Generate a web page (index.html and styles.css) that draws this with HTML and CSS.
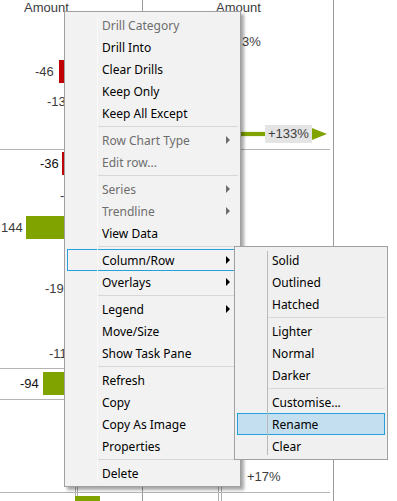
FILE: index.html
```html
<!DOCTYPE html>
<html lang="en">
<head>
    <meta charset="UTF-8">
    <title>Chart context menu</title>
    <link rel="stylesheet" href="styles.css">
</head>
<body>
<!-- chart behind the menu -->
<div class="chart">
    <span class="hdr hdr-l">Amount</span>
    <span class="hdr hdr-r">Amount</span>

    <div class="vl vl-top"></div>
    <div class="vl vl-right"></div>
    <div class="vl vl-bot"></div>
    <div class="vl vl-b1"></div>
    <div class="vl vl-b2"></div>
    <div class="vl vl-b3"></div>
    <div class="vl vl-b4"></div>

    <div class="hl hl-1"></div>
    <div class="hl hl-2"></div>
    <div class="hl hl-3"></div>
    <div class="hl hl-4"></div>
    <div class="hl hl-5"></div>

    <span class="num n46">-46</span>
    <div class="bar red b46"></div>
    <span class="num n13">-13</span>
    <span class="num n36">-36</span>
    <div class="bar red b36"></div>
    <span class="num nminus">-</span>
    <span class="num n144">144</span>
    <div class="bar green b144"></div>
    <span class="num n19">-19</span>
    <span class="num n11">-11</span>
    <span class="num n94">-94</span>
    <div class="bar green b94"></div>
    <div class="bar green bbot"></div>

    <span class="num p3">3%</span>
    <div class="trend">
        <div class="trend-line"></div>
        <span class="trend-label">+133%</span>
        <div class="trend-head"></div>
    </div>
    <span class="num p17">+17%</span>
</div>

<!-- context menu -->
<div class="menu main-menu">
    <div class="item off">Drill Category</div>
    <div class="item">Drill Into</div>
    <div class="item">Clear Drills</div>
    <div class="item">Keep Only</div>
    <div class="item">Keep All Except</div>
    <div class="sep"></div>
    <div class="item off">Row Chart Type<i class="arrow"></i></div>
    <div class="item off">Edit row...</div>
    <div class="sep"></div>
    <div class="item off">Series<i class="arrow"></i></div>
    <div class="item off">Trendline<i class="arrow"></i></div>
    <div class="item">View Data</div>
    <div class="sep"></div>
    <div class="item open">Column/Row<i class="arrow"></i></div>
    <div class="item">Overlays<i class="arrow"></i></div>
    <div class="sep"></div>
    <div class="item">Legend<i class="arrow"></i></div>
    <div class="item">Move/Size</div>
    <div class="item">Show Task Pane</div>
    <div class="sep"></div>
    <div class="item">Refresh</div>
    <div class="item">Copy</div>
    <div class="item">Copy As Image</div>
    <div class="item">Properties</div>
    <div class="sep"></div>
    <div class="item">Delete</div>
</div>

<div class="menu sub-menu">
    <div class="item">Solid</div>
    <div class="item">Outlined</div>
    <div class="item">Hatched</div>
    <div class="sep"></div>
    <div class="item">Lighter</div>
    <div class="item">Normal</div>
    <div class="item">Darker</div>
    <div class="sep"></div>
    <div class="item">Customise...</div>
    <div class="item hover">Rename</div>
    <div class="item">Clear</div>
</div>
</body>
</html>
```

FILE: styles.css
```css
*{
    margin: 0;
    padding: 0;
    box-sizing: border-box;
}
html,body{
    width: 397px;
    height: 501px;
    overflow: hidden;
    background: #fff;
}
body{
    position: relative;
    font-family: "Liberation Sans", Arial, sans-serif;
}

/* chart */
.chart{
    position: relative;
    width: 397px;
    height: 501px;
}
.hdr,.num{
    position: absolute;
    font-size: 13px;
    line-height: 15px;
    color: #3c3c3c;
    white-space: nowrap;
}
.hdr-l{ left: 24px; top: 0; }
.hdr-r{ left: 216px; top: 0; }

.vl{
    position: absolute;
    width: 1px;
    background: #9a9a9a;
}
.vl-top{ left: 142px; top: 0; height: 12px; }
.vl-right{ left: 333px; top: 0; height: 501px; }
.vl-bot{ left: 142px; top: 486px; height: 15px; }
.vl-b1{ left: 75px; top: 486px; height: 15px; background: #b0b0b0; }
.vl-b2{ left: 77px; top: 486px; height: 15px; background: #b0b0b0; }
.vl-b3{ left: 218px; top: 486px; height: 15px; background: #b0b0b0; }
.vl-b4{ left: 221px; top: 486px; height: 15px; background: #b0b0b0; }

.hl{
    position: absolute;
    height: 1px;
    background: #b4b4b4;
}
.hl-1{ left: 0; top: 149px; width: 66px; }
.hl-2{ left: 240px; top: 149px; width: 90px; }
.hl-3{ left: 0; top: 368px; width: 66px; }
.hl-4{ left: 0; top: 399px; width: 66px; }
.hl-5{ left: 0; top: 492px; width: 330px; }

.bar{ position: absolute; }
.red{ background: #c00000; }
.green{ background: #80a300; }

.n46{ left: 35px; top: 64px; }
.b46{ left: 59px; top: 60px; width: 12px; height: 23px; }
.n13{ left: 47px; top: 94px; }
.n36{ left: 40px; top: 156px; color: #111; }
.b36{ left: 62px; top: 152px; width: 2px; height: 23px; }
.nminus{ left: 60px; top: 188px; }
.n144{ left: 1px; top: 220px; }
.b144{ left: 26px; top: 216px; width: 44px; height: 23px; }
.n19{ left: 45px; top: 281px; }
.n11{ left: 49px; top: 346px; }
.n94{ left: 20px; top: 376px; color: #111; }
.b94{ left: 43px; top: 372px; width: 27px; height: 23px; }
.bbot{ left: 75px; top: 496px; width: 25px; height: 5px; }

.p3{ left: 242px; top: 34px; }
.p17{ left: 247px; top: 469px; }

.trend{
    position: absolute;
    left: 236px;
    top: 125px;
    display: flex;
    align-items: center;
    height: 18px;
}
.trend-line{
    width: 29px;
    height: 4px;
    background: #80a300;
    box-shadow: 0 0 2px #c8dc8c;
}
.trend-label{
    background: #e4e4e4;
    color: #3c3c3c;
    font-size: 13px;
    line-height: 18px;
    padding: 0 3px;
}
.trend-head{
    width: 0;
    height: 0;
    border-left: 15px solid #80a300;
    border-top: 6px solid transparent;
    border-bottom: 6px solid transparent;
}

/* menus */
.menu{
    position: absolute;
    display: flex;
    flex-direction: column;
    padding: 2px;
    border: 1px solid #a0a0a0;
    background: #f2f2f2;
    font-family: "Noto Sans", "Segoe UI", sans-serif;
    font-size: 12px;
    color: #000;
}
.menu::before{
    content: "";
    position: absolute;
    left: 32px;
    top: 4px;
    bottom: 4px;
    width: 1px;
}
.main-menu{
    left: 64px;
    top: 11px;
    width: 177px;
    box-shadow: 3px 3px 3px rgba(0,0,0,0.35);
}
.main-menu::before{
    background: #f9f9f9;
}
.sub-menu{
    left: 234px;
    top: 246px;
    width: 154px;
    background: #f0f0f0;
}
.sub-menu::before{
    background: #b9b9b9;
}
.item{
    display: flex;
    align-items: center;
    height: 22px;
    padding-left: 34px;
    border: 1px solid transparent;
    white-space: nowrap;
}
.item.off{
    color: #6d6d6d;
}
.item.open{
    border-color: #26a0da;
}
.item.hover{
    border-color: #26a0da;
    background: #c4e0f0;
}
.arrow{
    margin-left: auto;
    margin-right: 7px;
    width: 0;
    height: 0;
    border-left: 4px solid #000;
    border-top: 4px solid transparent;
    border-bottom: 4px solid transparent;
}
.off .arrow{
    border-left-color: #6d6d6d;
}
.sep{
    height: 5px;
    display: flex;
    align-items: center;
    margin-left: 30px;
}
.sep::after{
    content: "";
    flex: 1;
    height: 1px;
    background: #d7d7d7;
}
```
